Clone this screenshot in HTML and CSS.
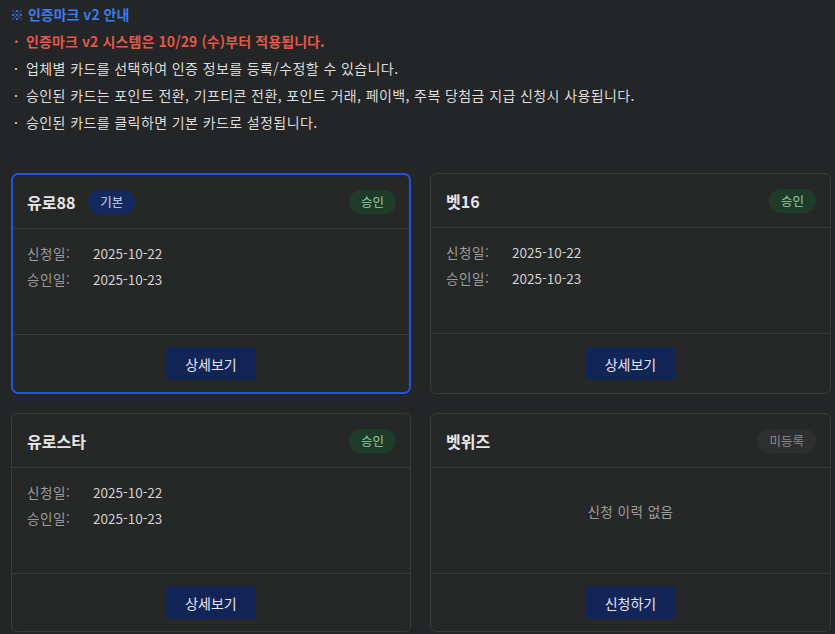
FILE: index.html
```html
<!DOCTYPE html>
<html lang="ko">
  <head>
    <meta charset="utf-8">
    <meta name="viewport" content="width=device-width">
    <title>인증마크 v2</title>
    <link rel="stylesheet" href="styles.css">
  </head>
  <body>

    <div class="notice">
      <p class="notice-title">※ 인증마크 v2 안내</p>
      <p class="notice-line warn"><span class="dot">·</span>인증마크 v2 시스템은 10/29 (수)부터 적용됩니다.</p>
      <p class="notice-line"><span class="dot">·</span>업체별 카드를 선택하여 인증 정보를 등록/수정할 수 있습니다.</p>
      <p class="notice-line"><span class="dot">·</span>승인된 카드는 포인트 전환, 기프티콘 전환, 포인트 거래, 페이백, 주복 당첨금 지급 신청시 사용됩니다.</p>
      <p class="notice-line"><span class="dot">·</span>승인된 카드를 클릭하면 기본 카드로 설정됩니다.</p>
    </div>

    <div class="card-grid">

      <div class="card selected">
        <div class="card-head">
          <span class="card-name">유로88</span>
          <span class="badge default">기본</span>
          <span class="badge approved">승인</span>
        </div>
        <div class="card-body">
          <div class="row"><span class="label">신청일:</span><span class="value">2025-10-22</span></div>
          <div class="row"><span class="label">승인일:</span><span class="value">2025-10-23</span></div>
        </div>
        <div class="card-foot">
          <button class="button">상세보기</button>
        </div>
      </div>

      <div class="card">
        <div class="card-head">
          <span class="card-name">벳16</span>
          <span class="badge approved">승인</span>
        </div>
        <div class="card-body">
          <div class="row"><span class="label">신청일:</span><span class="value">2025-10-22</span></div>
          <div class="row"><span class="label">승인일:</span><span class="value">2025-10-23</span></div>
        </div>
        <div class="card-foot">
          <button class="button">상세보기</button>
        </div>
      </div>

      <div class="card">
        <div class="card-head">
          <span class="card-name">유로스타</span>
          <span class="badge approved">승인</span>
        </div>
        <div class="card-body">
          <div class="row"><span class="label">신청일:</span><span class="value">2025-10-22</span></div>
          <div class="row"><span class="label">승인일:</span><span class="value">2025-10-23</span></div>
        </div>
        <div class="card-foot">
          <button class="button">상세보기</button>
        </div>
      </div>

      <div class="card">
        <div class="card-head">
          <span class="card-name">벳위즈</span>
          <span class="badge none">미등록</span>
        </div>
        <div class="card-body empty">
          <p>신청 이력 없음</p>
        </div>
        <div class="card-foot">
          <button class="button">신청하기</button>
        </div>
      </div>

    </div>

  </body>
</html>
```

FILE: styles.css
```css
body {
  margin: 0;
  background-color: #232526;
  color: #dcdcdc;
  font-family: "Noto Sans CJK KR", "Noto Sans", sans-serif;
  font-size: 13px;
}

p {
  margin: 0;
}

/* 안내 문구 */
.notice {
  padding: 1px 10px 0;
  font-size: 14px;
  letter-spacing: 0.4px;
  line-height: 27px;
  margin-bottom: 37px;
}

.notice-title {
  color: #3b7bf2;
  font-weight: bold;
  letter-spacing: 0;
}

.notice-line {
  padding-left: 4px;
}

.notice-line .dot {
  display: inline-block;
  width: 12px;
}

.warn {
  color: #e4574a;
  font-weight: bold;
  letter-spacing: 0.1px;
}

/* 카드 목록 */
.card-grid {
  display: grid;
  grid-template-columns: 400px 401px;
  gap: 19px 19px;
  margin-left: 11px;
}

.card {
  display: flex;
  flex-direction: column;
  background-color: #262727;
  border: 1px solid #3a3b3b;
  border-radius: 6px;
}

/* 기본 카드는 파란 테두리 */
.card.selected {
  border: 2px solid #2356d6;
  border-radius: 7px;
}

.card-head {
  display: flex;
  align-items: center;
  gap: 13px;
  height: 53px;
  padding: 0 14px 0 15px;
  border-bottom: 1px solid #3a3b3b;
}

.selected .card-head {
  padding: 0 13px 0 14px;
}

.card-name {
  font-size: 16px;
  font-weight: bold;
  color: #e6e6e6;
}

.badge {
  height: 24px;
  line-height: 24px;
  padding: 0 12px;
  border-radius: 12px;
  font-size: 12.5px;
}

.badge.default {
  background-color: #142a5f;
  color: #ccd6f0;
}

.badge.approved {
  margin-left: auto;
  background-color: #1f3b2a;
  color: #8fcfa3;
}

.badge.none {
  margin-left: auto;
  background-color: #2e2f30;
  color: #888;
}

.card-body {
  height: 94px;
  padding: 11px 15px 0;
  border-bottom: 1px solid #3a3b3b;
  font-size: 13.5px;
  line-height: 26px;
}

.selected .card-body {
  padding: 11px 14px 0;
}

.row .label {
  display: inline-block;
  width: 66px;
  letter-spacing: 0.6px;
  color: #9c9c9c;
}

.row .value {
  color: #d2d2d2;
}

.card-body.empty {
  height: 75px;
  padding-top: 30px;
  text-align: center;
  letter-spacing: 0.5px;
  color: #9c9c9c;
}

.card-foot {
  flex: 1;
  display: flex;
  justify-content: center;
  align-items: center;
  padding: 12px 0;
}

.button {
  height: 33px;
  padding: 0 19px;
  border: none;
  border-radius: 4px;
  background-color: #132457;
  color: #e2e6f0;
  font-family: "Noto Sans CJK KR", "Noto Sans", sans-serif;
  font-size: 14px;
  cursor: pointer;
}
```
